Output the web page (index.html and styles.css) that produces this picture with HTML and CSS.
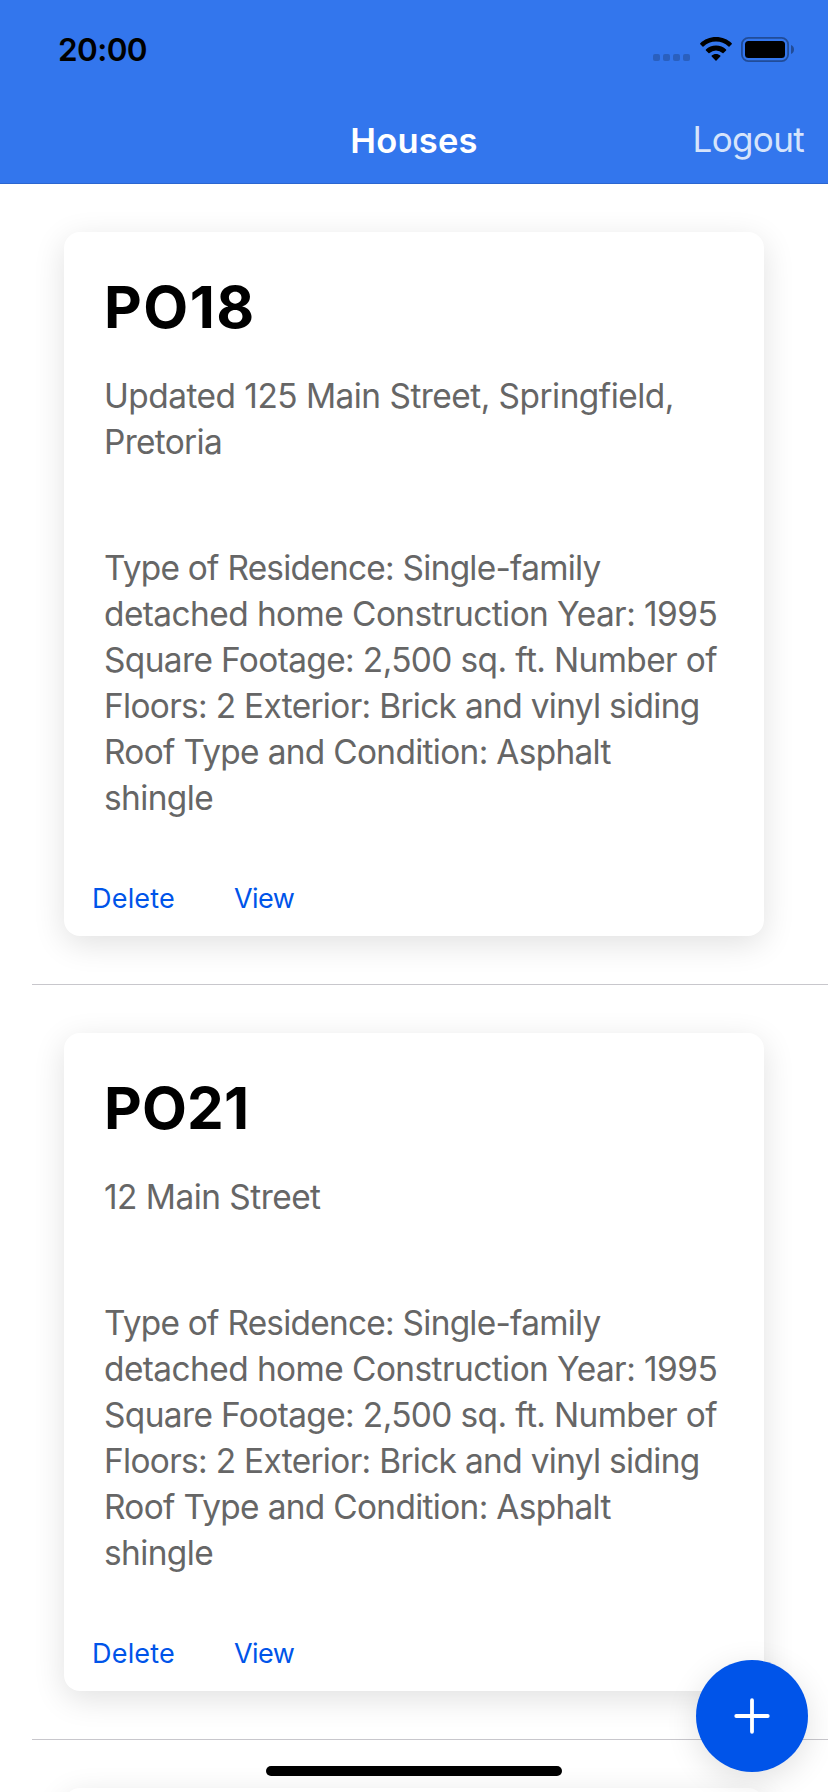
FILE: index.html
```html
<!DOCTYPE html>
<html lang="en">
<head>
<meta charset="utf-8">
<title>Houses</title>
<link rel="stylesheet" href="styles.css">
</head>
<body>
<div class="screen">
  <header class="header">
    <div class="status-bar">
      <span class="clock">20:00</span>
      <div class="status-icons">
        <svg class="signal" width="37" height="7" viewBox="0 0 37 7"><rect width="7" height="7" rx="2"/><rect x="10" width="7" height="7" rx="2"/><rect x="20" width="7" height="7" rx="2"/><rect x="30" width="7" height="7" rx="2"/></svg>
        <svg class="wifi" width="32" height="24" viewBox="0 0 32 24"><path d="M16 0C22.2 0 27.8 2.4 31.7 6.2Q32.2 6.700 31.700 7.200L29.500 9.400Q29 9.900 28.500 9.400A18.200 18.200 0 0 0 3.500 9.400Q3 9.900 2.500 9.400L.3 7.200Q-.2 6.700 .3 6.200C4.200 2.400 9.800 0 16 0Z"/><path d="M16 8.500C20 8.500 23.500 10 26.100 12.500Q26.500 13 26.100 13.500L23.500 16Q23 16.400 22.500 16A9.600 9.600 0 0 0 9.500 16Q9 16.400 8.500 16L5.900 13.500Q5.500 13 5.900 12.500C8.500 10 12 8.500 16 8.500Z"/><path d="M16 17C17.700 17 19.200 17.600 20.300 18.600Q20.800 19.100 20.300 19.600L16.500 23.500Q16 24 15.500 23.500L11.700 19.600Q11.200 19.100 11.700 18.600C12.800 17.600 14.300 17 16 17Z"/></svg>
        <svg class="battery" width="53" height="25" viewBox="0 0 53 25"><rect class="battery-shell" x="0.9" y="0.9" width="46.200" height="23.200" rx="6.500"/><path class="battery-tip" d="M50 8C52 8.800 53 10.500 53 12.500S52 16.200 50 17Z"/><rect x="4" y="4" width="40" height="17" rx="3.500"/></svg>
      </div>
    </div>
    <div class="toolbar">
      <h1 class="toolbar-title">Houses</h1>
      <a class="logout">Logout</a>
    </div>
  </header>

  <main class="list">
    <section class="item">
      <article class="card">
        <h2 class="card-title card-title-wide">PO18</h2>
        <p class="text address"><span class="track-s">Updated 125 Main Street, Springfield,</span><br><span class="track-l">Pretoria</span></p>
        <p class="text details"><span class="track-xl">Type of Residence: Single-family</span><br><span class="track-m">detached home Construction Year: 1995</span><br>Square Footage: 2,500 sq. ft. Number of<br><span class="track-l">Floors: 2 Exterior: Brick and vinyl siding</span><br><span class="track-l">Roof Type and Condition: Asphalt</span><br>shingle</p>
        <div class="actions"><a class="action">Delete</a><a class="action action-view">View</a></div>
      </article>
    </section>
    <section class="item">
      <article class="card">
        <h2 class="card-title">PO21</h2>
        <p class="text address"><span class="track-s">12 Main Street</span></p>
        <p class="text details"><span class="track-xl">Type of Residence: Single-family</span><br><span class="track-m">detached home Construction Year: 1995</span><br>Square Footage: 2,500 sq. ft. Number of<br><span class="track-l">Floors: 2 Exterior: Brick and vinyl siding</span><br><span class="track-l">Roof Type and Condition: Asphalt</span><br>shingle</p>
        <div class="actions"><a class="action">Delete</a><a class="action action-view">View</a></div>
      </article>
    </section>
    <section class="item">
      <article class="card card-next"></article>
    </section>
  </main>

  <button class="fab" aria-label="Add house">
    <svg width="36" height="36" viewBox="0 0 36 36"><path d="M18 2.250V33.750M2.250 18H33.750"/></svg>
  </button>
  <div class="home-indicator"></div>
</div>
</body>
</html>
```

FILE: styles.css
```css
* { box-sizing: border-box; }

body {
  margin: 0;
  background: #fff;
  font-family: Inter, "Liberation Sans", sans-serif;
}

.screen {
  position: relative;
  width: 828px;
  height: 1792px;
  overflow: hidden;
  background: #fff;
}

.header {
  height: 184px;
  background: #3376ed;
  border-bottom: 1px solid #2b66d0;
}

.status-bar {
  display: flex;
  justify-content: space-between;
  align-items: flex-start;
  height: 96px;
  padding: 30px 34px 0 58px;
}

.clock {
  font-size: 31.5px;
  line-height: 40px;
  font-weight: 600;
  letter-spacing: -0.6px;
  color: #000;
}

.status-icons {
  display: flex;
  align-items: flex-end;
  padding-top: 7px;
}

.signal { fill: #2a5fbe; margin: 0 10px 1px 0; }
.wifi { margin: 0 9px 1px 0; }
.battery-shell { fill: none; stroke: #214c98; stroke-width: 1.8; }
.battery-tip { fill: #214c98; }

.toolbar {
  display: grid;
  grid-template-columns: 1fr auto 1fr;
  align-items: center;
  height: 87px;
  padding: 0 24px;
}

.toolbar-title {
  grid-column: 2;
  margin: 3px 0 0;
  font-size: 34.5px;
  line-height: 44px;
  font-weight: 600;
  letter-spacing: 0.2px;
  color: #fff;
}

.logout {
  justify-self: end;
  margin-bottom: 2px;
  font-size: 35px;
  line-height: 44px;
  letter-spacing: -0.65px;
  color: #d6e4fb;
}

.item {
  padding: 48px 64px;
}

.item::after {
  content: "";
  display: block;
  height: 1px;
  margin: 48px -64px -48px -32px;
  background: #c8c7cc;
}

.card {
  padding: 39px 40px 19px;
  border-radius: 16px;
  background: #fff;
  box-shadow: 0 8px 32px rgba(0, 0, 0, 0.12);
}

.card-next { height: 300px; }

.card-title {
  margin: 0;
  font-size: 58.3px;
  line-height: 72px;
  font-weight: 700;
  letter-spacing: 0.2px;
  color: #000;
}

.card-title-wide { letter-spacing: 1.5px; }

.text {
  margin: 0;
  font-size: 33.4px;
  line-height: 46px;
  letter-spacing: -0.6px;
  color: #666;
  white-space: nowrap;
}

.track-s { letter-spacing: -0.51px; }
.track-m { letter-spacing: -0.55px; }
.track-l { letter-spacing: -0.67px; }
.track-xl { letter-spacing: -0.74px; }

.address { margin-top: 30px; }
.details { margin-top: 80px; }

.actions {
  display: flex;
  gap: 59px;
  margin: 60px 0 0 -12px;
}

.action {
  font-size: 27px;
  line-height: 36px;
  letter-spacing: 0.2px;
  color: #0054e9;
}

.action-view { letter-spacing: -0.6px; }

.fab {
  position: absolute;
  right: 20px;
  bottom: 20px;
  display: flex;
  align-items: center;
  justify-content: center;
  width: 112px;
  height: 112px;
  padding: 0;
  border: 0;
  border-radius: 50%;
  background: #0054e9;
  box-shadow: 0 8px 32px rgba(0, 0, 0, 0.12);
}

.fab path {
  fill: none;
  stroke: #fff;
  stroke-width: 3.8;
  stroke-linecap: round;
}

.home-indicator {
  position: absolute;
  left: 266px;
  bottom: 16px;
  width: 296px;
  height: 10px;
  border-radius: 5px;
  background: #000;
}
```
